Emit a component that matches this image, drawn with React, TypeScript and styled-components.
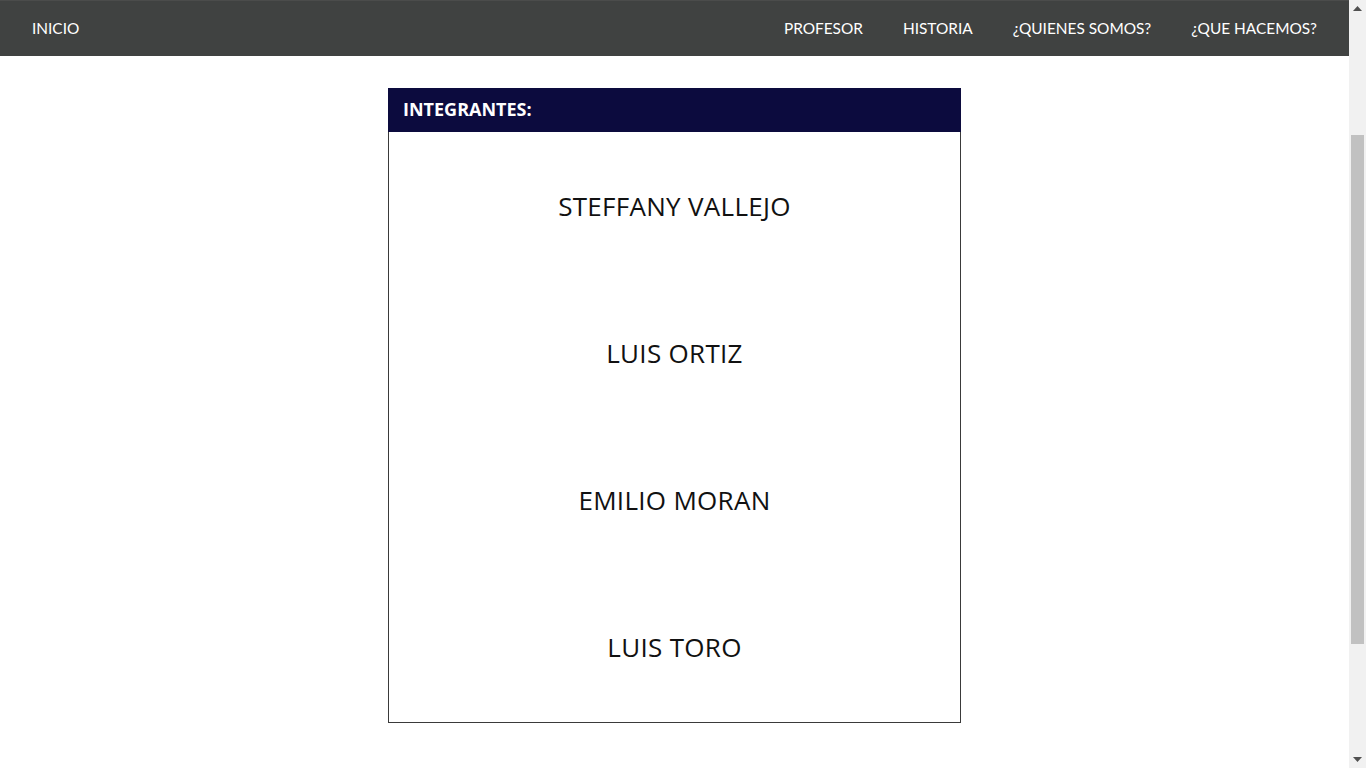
import React from "react";
import styled, { createGlobalStyle } from "styled-components";

const Global = createGlobalStyle`
  html, body { margin: 0; padding: 0; overflow: hidden; }
  body { background: #fff; font-family: "Lato", "Open Sans", sans-serif; }
`;

const Shell = styled.div`
  display: flex;
  height: 100vh;
`;

const Viewport = styled.div`
  flex: 1;
  min-width: 0;
  display: flex;
  flex-direction: column;
`;

const Nav = styled.nav`
  height: 56px;
  flex: none;
  background: #404241;
  border-top: 1px solid #4b4c4b;
  box-sizing: border-box;
  display: flex;
  align-items: center;
  justify-content: space-between;
  padding: 0 12px 2px;
`;

const NavGroup = styled.div`
  display: flex;
  align-items: center;
`;

const NavLink = styled.a`
  color: #fff;
  font-family: "Lato", sans-serif;
  font-size: 15.4px;
  padding: 0 20px;
  text-decoration: none;
  white-space: nowrap;
`;

const Page = styled.main`
  padding-top: 32px;
  display: flex;
  justify-content: center;
`;

const Card = styled.section`
  width: 573px;
`;

const CardHeader = styled.h2`
  margin: 0;
  height: 44px;
  background: #0c0b3e;
  color: #fff;
  font-family: "Open Sans", sans-serif;
  font-weight: 700;
  font-size: 18px;
  display: flex;
  align-items: center;
  padding: 0 15px 2px;
  box-sizing: border-box;
`;

const CardBody = styled.ul`
  margin: 0;
  padding: 0 0 2px;
  list-style: none;
  border: 1px solid #3a3a3a;
  border-top: none;
`;

const Name = styled.li`
  height: 147px;
  display: flex;
  align-items: center;
  justify-content: center;
  color: #111;
  font-family: "Open Sans", sans-serif;
  font-size: 26px;
  letter-spacing: 0.3px;
`;

const Scrollbar = styled.div`
  width: 17px;
  flex: none;
  background: #f1f1f1;
  display: flex;
  flex-direction: column;
`;

const ArrowButton = styled.div`
  height: 17px;
  flex: none;
  display: flex;
  align-items: center;
  justify-content: center;
`;

const Track = styled.div`
  flex: 1;
  padding: 118px 2px 0;
`;

const Thumb = styled.div`
  height: 509px;
  background: #c1c1c1;
`;

const Arrow = ({ down }: { down?: boolean }) => (
  <svg width="9" height="5" viewBox="0 0 9 5">
    {down ? (
      <polygon points="0,0 9,0 4.5,5" fill="#505050" />
    ) : (
      <polygon points="4.5,0 9,5 0,5" fill="#505050" />
    )}
  </svg>
);

const names = ["STEFFANY VALLEJO", "LUIS ORTIZ", "EMILIO MORAN", "LUIS TORO"];

export default function App() {
  return (
    <>
      <Global />
      <Shell>
        <Viewport>
          <Nav>
            <NavGroup>
              <NavLink href="#">INICIO</NavLink>
            </NavGroup>
            <NavGroup>
              <NavLink href="#">PROFESOR</NavLink>
              <NavLink href="#">HISTORIA</NavLink>
              <NavLink href="#">¿QUIENES SOMOS?</NavLink>
              <NavLink href="#">¿QUE HACEMOS?</NavLink>
            </NavGroup>
          </Nav>
          <Page>
            <Card>
              <CardHeader>INTEGRANTES:</CardHeader>
              <CardBody>
                {names.map((n) => (
                  <Name key={n}>{n}</Name>
                ))}
              </CardBody>
            </Card>
          </Page>
        </Viewport>
        <Scrollbar>
          <ArrowButton>
            <Arrow />
          </ArrowButton>
          <Track>
            <Thumb />
          </Track>
          <ArrowButton>
            <Arrow down />
          </ArrowButton>
        </Scrollbar>
      </Shell>
    </>
  );
}
